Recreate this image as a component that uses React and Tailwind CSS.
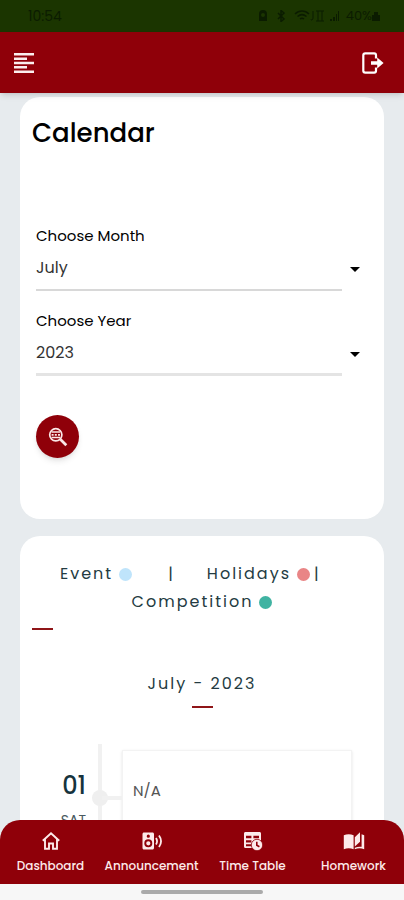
import { useState } from "react";

const MONTHS = ["January", "February", "March", "April", "May", "June", "July", "August", "September", "October", "November", "December"];
const YEARS = ["2022", "2023", "2024"];

const DAYS = [
  { date: "01", day: "SAT", note: "N/A" },
];

function MenuIcon() {
  return (
    <svg viewBox="0 0 20 20" className="w-5 h-5" fill="currentColor" aria-hidden="true">
      <path d="M0 0h20v2.6H0zM0 4.5h13v2.4H0zM0 8.7h20v2.6H0zM0 13h13v2.4H0zM0 17.4h20V20H0z" />
    </svg>
  );
}

function ExitIcon() {
  return (
    <svg viewBox="0 0 22 22" className="w-[22px] h-[22px]" fill="none" aria-hidden="true">
      <path d="M14 6.5V3.2C14 1.9 13.4 1.3 12.2 1.3H3.3C2 1.3 1.3 2 1.3 3.2v15.6c0 1.2.7 1.9 2 1.9h8.9c1.2 0 1.8-.6 1.8-1.9v-3.3" stroke="currentColor" strokeWidth="2.2" />
      <path d="M9 9.300h6.200V5.400L21.600 11l-6.400 5.600v-3.900H9z" fill="currentColor" />
    </svg>
  );
}

function SearchWebIcon() {
  return (
    <svg viewBox="0 0 20 20" className="w-5 h-5" fill="none" stroke="currentColor" aria-hidden="true">
      <circle cx="7.8" cy="7.8" r="6.1" strokeWidth="1.7" />
      <path d="M3.500 5h8.600M3.500 10.600h8.600" strokeWidth="1.500" />
      <path d="M3.600 7.800h2M6.800 7.800h2M10 7.800h2" strokeWidth="1.800" />
      <path d="M12.300 12.300l6 6" strokeWidth="2.700" />
    </svg>
  );
}

function HomeIcon() {
  return (
    <svg viewBox="0 0 20 20" className="w-5 h-5" fill="none" stroke="currentColor" strokeWidth="1.900" aria-hidden="true">
      <path d="M1.800 9.800L10 2.200l8.200 7.600M4 8.200v9.600h4v-5.300h4v5.300h4V8.200" />
    </svg>
  );
}

function SpeakerIcon() {
  return (
    <svg viewBox="0 0 22 20" className="w-[22px] h-5" fill="none" aria-hidden="true">
      <path fill="currentColor" fillRule="evenodd" d="M3 1.500h8.500c.8 0 1.500.7 1.500 1.500v14c0 .8-.7 1.500-1.500 1.500H3c-.8 0-1.500-.7-1.500-1.500V3c0-.8.7-1.500 1.500-1.500zM7.300 3.600a1.600 1.600 0 100 3.200 1.600 1.600 0 000-3.200zM7.300 8.300a4 4 0 100 8 4 4 0 000-8zM7.300 10.200a2.100 2.100 0 110 4.200 2.100 2.100 0 010-4.200z" />
      <path d="M15 7c1.300 2 1.300 4.500 0 6.500M18 4.500c2.500 3.500 2.500 8 0 11.500" stroke="currentColor" strokeWidth="1.800" />
    </svg>
  );
}

function TableClockIcon() {
  return (
    <svg viewBox="0 0 20 20" className="w-5 h-5" fill="none" aria-hidden="true">
      <path fill="currentColor" fillRule="evenodd" d="M2.500 1h14c.9 0 1.500.6 1.500 1.500V17H2.500C1.600 17 1 16.400 1 15.500v-13C1 1.600 1.600 1 2.500 1zM3 4.800v2.500h5.400V4.800zM10.400 4.800v2.500H16V4.800zM3 9.200v2.300h5.400V9.200zM3 13.300v2h5.400v-2z" />
      <circle cx="14" cy="14" r="5.700" fill="currentColor" stroke="#8f0009" strokeWidth="0.800" />
      <path d="M13.800 10.700v3.600l2.600 1.500" stroke="#8f0009" strokeWidth="1.600" />
    </svg>
  );
}

function BookIcon() {
  return (
    <svg viewBox="0 0 22 20" className="w-[22px] h-5" aria-hidden="true">
      <path fill="currentColor" d="M.8 4.300c3-1.500 6.800-1.500 9.800 0v14c-3-1.400-6.800-1.400-9.800 0zM11.800 6.200L17 1.200v9.600l-5.200 4.600z" />
      <path fill="currentColor" d="M18.600 3.300c.9.200 1.900.6 2.600 1v14c-3-1.400-6.400-1.400-9.400 0v-1.500c2.200-1 4.500-1.300 6.800-1z" />
    </svg>
  );
}

function StatusIcons() {
  return (
    <div className="flex items-center gap-1 text-[13px]">
      <svg viewBox="0 0 10 12" className="w-2.5 h-3 mr-1" fill="currentColor" aria-hidden="true">
        <path fillRule="evenodd" d="M5 0a4 4 0 014 4v7H1V4a4 4 0 014-4zM5 3a2 2 0 100 4 2 2 0 000-4z" />
      </svg>
      <svg viewBox="0 0 10 12" className="w-2.5 h-3 mr-1" fill="none" stroke="currentColor" strokeWidth="1.500" aria-hidden="true">
        <path d="M2 3l6 6-3 2.500V.5L8 3 2 9" />
      </svg>
      <svg viewBox="0 0 16 12" className="w-4 h-3" fill="none" stroke="currentColor" strokeWidth="1.500" aria-hidden="true">
        <path d="M1 4c4-4 10-4 14 0M3.500 6.500c3-2.500 6-2.500 9 0M6 9c1.500-1.200 2.500-1.200 4 0" />
      </svg>
      <svg viewBox="0 0 16 12" className="w-4 h-3 -ml-1" fill="none" stroke="currentColor" aria-hidden="true">
        <path d="M3 1v7c0 2-2 3-2 1M6 1h8M8 1v10M12 1v10M6 11h8" />
      </svg>
      <svg viewBox="0 0 10 12" className="w-2.5 h-3" fill="currentColor" aria-hidden="true">
        <path d="M0 9h2v2H0zM3 7h2v4H3zM6 4h1v7H6zM8 1h1v10H8z" />
      </svg>
      <span className="ml-0.5">40%</span>
      <svg viewBox="0 0 8 12" className="w-2 h-3 -ml-1" fill="currentColor" aria-hidden="true">
        <path d="M2 2h4v3h2v6H0V5h2z" />
      </svg>
    </div>
  );
}

function Field({ id, label, value, options, onChange, lineCls }) {
  return (
    <div>
      <label htmlFor={id} className="block text-[15px] leading-[22px] text-black">{label}</label>
      <div className="flex items-center gap-2">
        <select
          id={id}
          value={value}
          onChange={(e) => onChange(e.target.value)}
          className={`flex-1 h-11 appearance-none bg-transparent rounded-none outline-none text-base text-[#333] ${lineCls}`}
        >
          {options.map(o => <option key={o}>{o}</option>)}
        </select>
        <svg viewBox="0 0 10 5" className="w-2.5 h-[5px]" fill="#000" aria-hidden="true">
          <path d="M0 0h10L5 5z" />
        </svg>
      </div>
    </div>
  );
}

const NAV = [
  { label: "Dashboard", icon: HomeIcon },
  { label: "Announcement", icon: SpeakerIcon },
  { label: "Time Table", icon: TableClockIcon },
  { label: "Homework", icon: BookIcon },
];

export default function App() {
  const [month, setMonth] = useState("July");
  const [year, setYear] = useState("2023");

  return (
    <div className="h-screen flex flex-col bg-[#e7ebee] font-['Poppins','Inter',sans-serif]">
      {/* Phone status bar */}
      <div className="h-8 shrink-0 flex items-center justify-between pl-7 pr-6 bg-[#1b3500] text-[#0b1c00]">
        <span className="text-sm">10:54</span>
        <StatusIcons />
      </div>

      <header className="relative z-10 h-[61px] shrink-0 flex items-center justify-between pl-3.5 pr-5 bg-[#8f0009] text-[#fbeeee] shadow-md">
        <button type="button" aria-label="Menu" className="cursor-pointer"><MenuIcon /></button>
        <button type="button" aria-label="Log out" className="cursor-pointer text-white"><ExitIcon /></button>
      </header>

      <main className="flex-1 min-h-0 overflow-y-auto [scrollbar-width:none] px-5 pt-1 pb-8 space-y-[17px]">
        <section className="bg-white rounded-[20px] px-4 pt-5 pb-[61px]">
          <h1 className="-ml-1 text-[26px] leading-8 font-medium text-black">Calendar</h1>
          <form className="mt-[76px]" onSubmit={(e) => e.preventDefault()}>
            <div className="space-y-[19px] pr-2">
              <Field id="month" label="Choose Month" value={month} options={MONTHS} onChange={setMonth} lineCls="border-b-2 border-[#d8d8d8]" />
              <Field id="year" label="Choose Year" value={year} options={YEARS} onChange={setYear} lineCls="border-b-3 border-[#e4e4e4]" />
            </div>
            <button type="submit" aria-label="Search" className="mt-[39px] w-[43px] h-[43px] rounded-full flex items-center justify-center bg-[#8f0009] text-[#fbe8e8] shadow-md cursor-pointer">
              <SearchWebIcon />
            </button>
          </form>
        </section>

        <section className="bg-white rounded-[20px] px-3 pt-6 pb-6">
          <div className="text-base leading-7 tracking-[2px] text-[#243b42]">
            <div className="flex items-center pl-7">
              <span>Event</span>
              <span className="ml-1.5 w-[13px] h-[13px] rounded-full bg-[#bfe4fb]" />
              <span className="ml-9">|</span>
              <span className="ml-8">Holidays</span>
              <span className="ml-1.5 w-[13px] h-[13px] rounded-full bg-[#e98586]" />
              <span className="ml-1">|</span>
            </div>
            <div className="flex items-center justify-center gap-1.5">
              <span>Competition</span>
              <span className="w-[13px] h-[13px] rounded-full bg-[#40b3a2]" />
            </div>
          </div>
          <div className="mt-3 w-[21px] h-[2px] bg-[#8f1518]" />

          <h2 className="mt-10 text-center text-base leading-7 tracking-[2px] text-[#243b42]">{month} - {year}</h2>
          <div className="mt-2 mx-auto w-[21px] h-[2px] bg-[#8f1518]" />

          <ul className="mt-9">
            {DAYS.map(d => (
              <li key={d.date} className="flex">
                <div className="w-[62px] pt-[26px] pr-2 text-right text-[#16333d]">
                  <div className="text-2xl leading-8 font-medium">{d.date}</div>
                  <div className="mt-2 text-sm leading-5 text-[#4a5a60]">{d.day}</div>
                </div>
                {/* Timeline rail */}
                <div className="w-7 flex">
                  <div className="relative ml-1 w-1 bg-[#f1f1f1]">
                    <span className="absolute top-[46px] -left-1.5 w-4 h-4 rounded-full bg-[#efefef]" />
                    <span className="absolute top-[52px] left-1 w-5 h-1 bg-[#f1f1f1]" />
                  </div>
                </div>
                <div className="flex-1 mt-1.5 mr-5 min-h-[100px] px-2.5 pt-7 border border-[#f3f3f3] bg-white shadow">
                  <p className="text-[15px] leading-6 text-[#555]">{d.note}</p>
                </div>
              </li>
            ))}
          </ul>
        </section>
      </main>

      <nav className="relative z-10 -mt-5 shrink-0 grid grid-cols-4 h-16 pt-[11px] rounded-t-[20px] bg-[#8f0009] text-[#fdeaea]">
        {NAV.map(item => (
          <a key={item.label} href="#" className="flex flex-col items-center gap-[5px]">
            <item.icon />
            <span className="text-xs leading-5 font-medium whitespace-nowrap">{item.label}</span>
          </a>
        ))}
      </nav>
      <div className="h-4 shrink-0 flex items-center justify-center bg-[#f7f7f7]">
        <span className="w-[30%] h-1 rounded-full bg-[#aaa]" />
      </div>
    </div>
  );
}
